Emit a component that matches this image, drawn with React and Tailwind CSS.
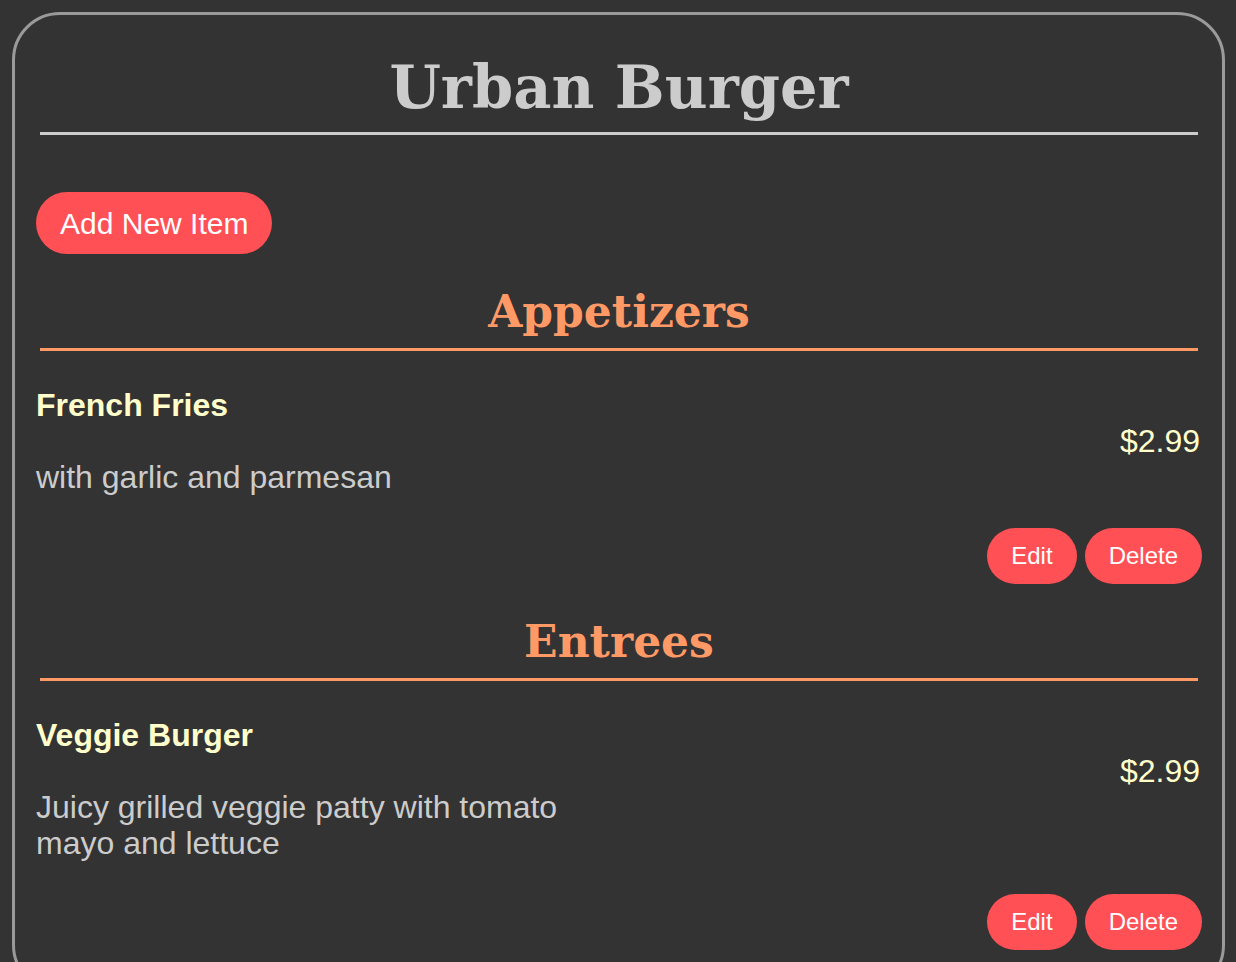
import React from 'react';

const menu = [
  {
    category: 'Appetizers',
    items: [{ id: 1, name: 'French Fries', description: 'with garlic and parmesan', price: '$2.99' }],
  },
  {
    category: 'Entrees',
    items: [
      { id: 2, name: 'Veggie Burger', description: 'Juicy grilled veggie patty with tomato mayo and lettuce', price: '$2.99' },
    ],
  },
];

const sans = { fontFamily: '"Liberation Sans", Arial, sans-serif' };
const serif = { fontFamily: '"DejaVu Serif", Georgia, serif' };

function MenuItem({ item }) {
  return (
    <div>
      <div className="flex justify-between">
        <div className="w-1/2">
          <h3 className="text-[32px] leading-[36px] font-bold text-[#ffffcc]">{item.name}</h3>
          <p className="mt-9 text-[32px] leading-[36px] text-[#cccccc]">{item.description}</p>
        </div>
        <div className="mt-9 mr-[2px] text-[32px] leading-[36px] text-[#ffffcc]">{item.price}</div>
      </div>
      <div className="flex justify-end gap-2 mt-[33px]">
        <button className="h-14 px-6 rounded-full bg-[#ff5055] text-white text-2xl">Edit</button>
        <button className="h-14 px-6 rounded-full bg-[#ff5055] text-white text-2xl">Delete</button>
      </div>
    </div>
  );
}

export default function App() {
  return (
    <div className="min-h-screen bg-[#333333] pt-3 pb-6 pl-3 pr-[11px]" style={sans}>
      <div className="border-[3px] border-[#9a9a9a] rounded-[48px] pl-[21px] pr-5 pb-10">
        <h1 className="pt-[43px] text-center text-[59px] leading-none font-bold text-[#cccccc]" style={serif}>
          Urban Burger
        </h1>
        <div className="mt-[15px] ml-1 mr-1 h-[3px] bg-[#cccccc]" />

        <button className="mt-[57px] h-[62px] px-6 rounded-full bg-[#ff5055] text-white text-[30px]">
          Add New Item
        </button>

        {menu.map(section => (
          <section key={section.category}>
            <h2 className="mt-9 text-center text-[44px] leading-none font-bold text-[#ff9966]" style={serif}>
              {section.category}
            </h2>
            <div className="mt-[14px] mb-9 ml-1 mr-1 h-[3px] bg-[#ff9966]" />
            {section.items.map(item => (
              <MenuItem key={item.id} item={item} />
            ))}
          </section>
        ))}
      </div>
    </div>
  );
}
